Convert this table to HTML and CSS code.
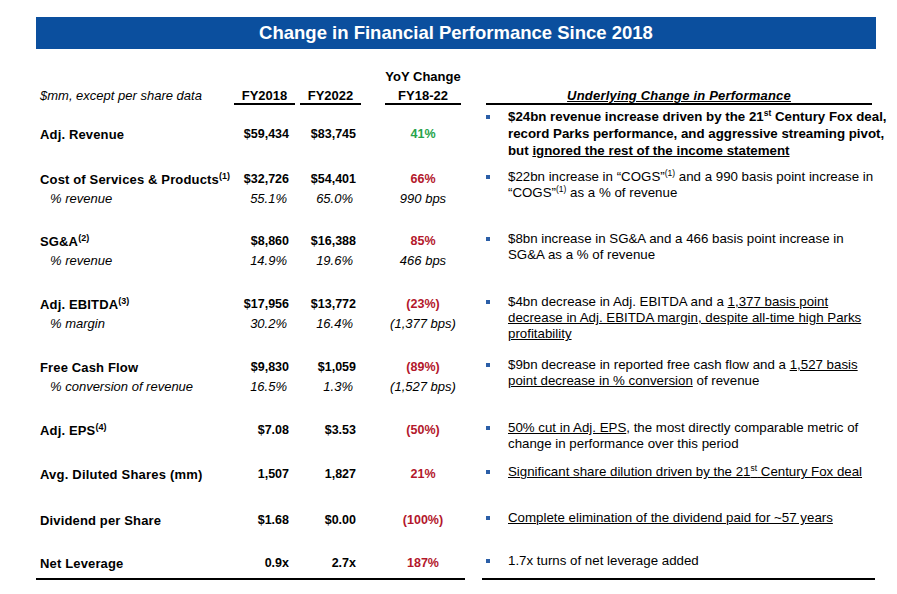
FILE: index.html
```html
<!DOCTYPE html>
<html>
<head>
<meta charset="utf-8">
<title>Change in Financial Performance Since 2018</title>
<link rel="stylesheet" href="styles.css">
</head>
<body>
<div class="page">
  <div class="title">Change in Financial Performance Since 2018</div>
  <div class="grid">
    <!-- header -->
    <div class="hcell hlabel">$mm, except per share data</div>
    <div class="hcell"><div class="hval w61">FY2018</div></div>
    <div class="hcell"><div class="hval w61">FY2022</div></div>
    <div class="hcell"><div class="hval w76"><div class="hl1">YoY Change</div>FY18-22</div></div>
    <div class="hcell"><div class="hright">Underlying Change in Performance</div></div>

    <!-- Adj. Revenue -->
    <div class="lab r1"><div class="main">Adj. Revenue</div></div>
    <div class="r1"><div class="v a">$59,434</div></div>
    <div class="r1"><div class="v b">$83,745</div></div>
    <div class="r1"><div class="v c green">41%</div></div>
    <div class="bl b1"><div>$24bn revenue increase driven by the 21<span class="sp">st</span> Century Fox deal,<br>record Parks performance, and aggressive streaming pivot,<br>but <u>ignored the rest of the income statement</u></div></div>

    <!-- COGS -->
    <div class="lab"><div class="main">Cost of Services &amp; Products<span class="sp">(1)</span></div><div class="sub">% revenue</div></div>
    <div><div class="v a">$32,726</div><div class="v a s">55.1%</div></div>
    <div><div class="v b">$54,401</div><div class="v b s">65.0%</div></div>
    <div><div class="v c red">66%</div><div class="v c s">990 bps</div></div>
    <div class="bl"><div>$22bn increase in “COGS”<span class="sp">(1)</span> and a 990 basis point increase in<br>“COGS”<span class="sp">(1)</span> as a % of revenue</div></div>

    <!-- SG&A -->
    <div class="lab"><div class="main">SG&amp;A<span class="sp">(2)</span></div><div class="sub">% revenue</div></div>
    <div><div class="v a">$8,860</div><div class="v a s">14.9%</div></div>
    <div><div class="v b">$16,388</div><div class="v b s">19.6%</div></div>
    <div><div class="v c red">85%</div><div class="v c s">466 bps</div></div>
    <div class="bl"><div>$8bn increase in SG&amp;A and a 466 basis point increase in<br>SG&amp;A as a % of revenue</div></div>

    <!-- EBITDA -->
    <div class="lab"><div class="main">Adj. EBITDA<span class="sp">(3)</span></div><div class="sub">% margin</div></div>
    <div><div class="v a">$17,956</div><div class="v a s">30.2%</div></div>
    <div><div class="v b">$13,772</div><div class="v b s">16.4%</div></div>
    <div><div class="v c red">(23%)</div><div class="v c s">(1,377 bps)</div></div>
    <div class="bl"><div>$4bn decrease in Adj. EBITDA and a <u>1,377 basis point</u><br><u>decrease in Adj. EBITDA margin, despite all-time high Parks</u><br><u>profitability</u></div></div>

    <!-- FCF -->
    <div class="lab"><div class="main">Free Cash Flow</div><div class="sub">% conversion of revenue</div></div>
    <div><div class="v a">$9,830</div><div class="v a s">16.5%</div></div>
    <div><div class="v b">$1,059</div><div class="v b s">1.3%</div></div>
    <div><div class="v c red">(89%)</div><div class="v c s">(1,527 bps)</div></div>
    <div class="bl"><div>$9bn decrease in reported free cash flow and a <u>1,527 basis</u><br><u>point decrease in % conversion</u> of revenue</div></div>

    <!-- EPS -->
    <div class="lab"><div class="main">Adj. EPS<span class="sp">(4)</span></div></div>
    <div><div class="v a">$7.08</div></div>
    <div><div class="v b">$3.53</div></div>
    <div><div class="v c red">(50%)</div></div>
    <div class="bl"><div><u>50% cut in Adj. EPS</u>, the most directly comparable metric of<br>change in performance over this period</div></div>

    <!-- Shares -->
    <div class="lab"><div class="main wide">Avg. Diluted Shares (mm)</div></div>
    <div><div class="v a">1,507</div></div>
    <div><div class="v b">1,827</div></div>
    <div><div class="v c red">21%</div></div>
    <div class="bl"><div><u>Significant share dilution driven by the 21<span class="sp">st</span> Century Fox deal</u></div></div>

    <!-- Dividend -->
    <div class="lab"><div class="main">Dividend per Share</div></div>
    <div><div class="v a">$1.68</div></div>
    <div><div class="v b">$0.00</div></div>
    <div><div class="v c red">(100%)</div></div>
    <div class="bl"><div><u>Complete elimination of the dividend paid for ~57 years</u></div></div>

    <!-- Leverage -->
    <div class="lab"><div class="main">Net Leverage</div></div>
    <div><div class="v a">0.9x</div></div>
    <div><div class="v b">2.7x</div></div>
    <div><div class="v c red">187%</div></div>
    <div class="bl"><div>1.7x turns of net leverage added</div></div>

    <!-- closing rules -->
    <div class="endl"></div>
    <div class="endr"></div>
  </div>
</div>
</body>
</html>
```

FILE: styles.css
```css
* { box-sizing: border-box; margin: 0; padding: 0; }
html, body { background: #ffffff; }
body {
  margin: 0;
  font-family: "Liberation Sans", Arial, sans-serif;
  color: #000;
}
.page {
  width: 897px;
  padding: 17px 0 0 36px;
}
.title {
  width: 840px;
  height: 32px;
  background: #0b4f9e;
  color: #fff;
  font-weight: bold;
  font-size: 18.5px;
  line-height: 32px;
  text-align: center;
}
.grid {
  margin-top: 21px;
  display: grid;
  grid-template-columns: 198px 66px 85px 97px 393px;
  grid-template-rows: 35px 65px 62px 63px 63px 63px 44px 46px 43px 24px 2px;
}
/* header */
.hcell {
  align-self: end;
  font-size: 13px;
  line-height: 14px;
  font-weight: bold;
}
.hlabel {
  font-weight: normal;
  font-style: italic;
  padding-left: 4px;
  border-bottom: 2px solid transparent;
}
.hval {
  border-bottom: 2px solid #000;
  text-align: center;
}
.w61 { width: 61px; }
.w76 { width: 76px; }
.hl1 { margin-bottom: 5px; }
.hright {
  margin-left: 4px;
  width: 386px;
  text-align: center;
  font-style: italic;
  text-decoration: underline;
  letter-spacing: 0.2px;
  border-bottom: 2px solid #000;
}
/* body rows */
.lab {
  padding-left: 4px;
  font-size: 13px;
  line-height: 19px;
  white-space: nowrap;
}
.lab .main { font-weight: bold; letter-spacing: 0.15px; }
.lab .main.wide { letter-spacing: 0.2px; }
.lab .sub { font-style: italic; padding-left: 10px; }
.r1 { margin-top: 20px; }
.v {
  font-size: 12.5px;
  font-weight: bold;
  line-height: 19px;
  text-align: right;
  width: 61px;
  white-space: nowrap;
}
.v.a { padding-right: 6px; }
.v.b { padding-right: 5px; }
.v.s { font-weight: normal; font-style: italic; font-size: 13px; padding-right: 8px; }
.v.c { width: 76px; text-align: center; padding-right: 0; }
.v.c.s { padding-right: 0; }
.green { color: #26a34a; }
.red { color: #b3172b; }
.sp {
  font-size: 8.5px;
  line-height: 0;
  vertical-align: 5px;
  letter-spacing: 0;
}
.lab .sp { font-size: 9px; }
.bl {
  display: flex;
  margin-top: -1px;
  font-size: 13.3px;
  line-height: 16px;
  white-space: nowrap;
}
.bl::before {
  content: "";
  flex: none;
  width: 4px;
  height: 4px;
  background: #2b5ea7;
  margin: 6px 18px 0 4px;
}
.bl u { text-underline-offset: 1px; }
.bl.b1 {
  font-weight: bold;
  line-height: 17px;
  margin-top: 3px;
}
.bl.b1::before { margin-top: 7px; }
.endl {
  grid-column: 1 / 5;
  border-top: 2px solid #000;
  margin-right: 17px;
}
.endr {
  grid-column: 5;
  border-top: 2px solid #000;
}
```
